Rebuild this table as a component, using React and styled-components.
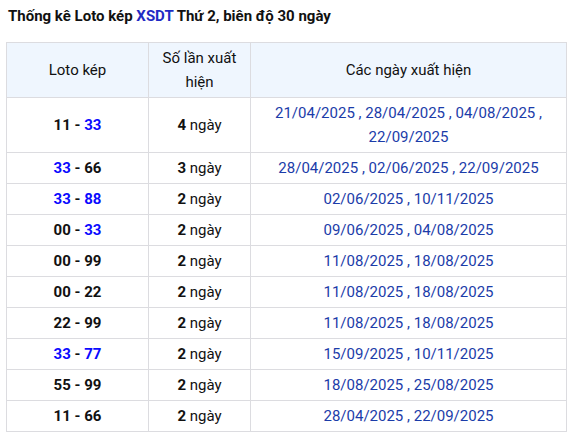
import React from 'react'
import styled, { createGlobalStyle } from 'styled-components'

const GlobalStyle = createGlobalStyle`
  body {
    margin: 0;
    background: #fff;
    font-family: Roboto, "Liberation Sans", Arial, sans-serif;
    color: #111;
  }
`

const rows = [
  { a: '11', b: '33', blue: ['33'], n: 4, dates: ['21/04/2025', '28/04/2025', '04/08/2025', '22/09/2025'] },
  { a: '33', b: '66', blue: ['33'], n: 3, dates: ['28/04/2025', '02/06/2025', '22/09/2025'] },
  { a: '33', b: '88', blue: ['33', '88'], n: 2, dates: ['02/06/2025', '10/11/2025'] },
  { a: '00', b: '33', blue: ['33'], n: 2, dates: ['09/06/2025', '04/08/2025'] },
  { a: '00', b: '99', blue: [], n: 2, dates: ['11/08/2025', '18/08/2025'] },
  { a: '00', b: '22', blue: [], n: 2, dates: ['11/08/2025', '18/08/2025'] },
  { a: '22', b: '99', blue: [], n: 2, dates: ['11/08/2025', '18/08/2025'] },
  { a: '33', b: '77', blue: ['33', '77'], n: 2, dates: ['15/09/2025', '10/11/2025'] },
  { a: '55', b: '99', blue: [], n: 2, dates: ['18/08/2025', '25/08/2025'] },
  { a: '11', b: '66', blue: [], n: 2, dates: ['28/04/2025', '22/09/2025'] },
]

const Wrapper = styled.div`
  padding: 6px 6px 0 6px;
  width: 560px;
`

const Title = styled.h3`
  margin: 0 0 16px 2px;
  font-size: 15px;
  line-height: 20px;
  font-weight: 700;
  color: #111;
  span {
    color: #1f2bc4;
  }
`

const Table = styled.table`
  width: 560px;
  border-collapse: collapse;
  table-layout: fixed;
  font-size: 15px;
`

const Th = styled.th`
  box-sizing: border-box;
  width: ${p => p.w}px;
  background: #eff6fe;
  border: 1px solid #dcdce0;
  font-weight: 400;
  line-height: 24px;
  padding: 3px 8px;
  color: #111;
`

const Td = styled.td`
  box-sizing: border-box;
  border: 1px solid #dcdce0;
  text-align: center;
  line-height: 24px;
  padding: 3px 8px;
`

const Num = styled.b`
  color: ${p => (p.blue ? '#0a0aff' : '#111')};
`

const Dates = styled(Td)`
  color: #1b3ca9;
`

export default function App() {
  return (
    <Wrapper>
      <GlobalStyle />
      <Title>
        Thống kê Loto kép <span>XSDT</span> Thứ 2, biên độ 30 ngày
      </Title>
      <Table>
        <thead>
          <tr>
            <Th w={142}>Loto kép</Th>
            <Th w={102}>Số lần xuất hiện</Th>
            <Th w={316}>Các ngày xuất hiện</Th>
          </tr>
        </thead>
        <tbody>
          {rows.map((r, i) => (
            <tr key={i}>
              <Td>
                <Num blue={r.blue.includes(r.a)}>{r.a}</Num> <b>-</b>{' '}
                <Num blue={r.blue.includes(r.b)}>{r.b}</Num>
              </Td>
              <Td>
                <b>{r.n}</b> ngày
              </Td>
              <Dates>
                {r.dates.map((d, j) => (
                  <React.Fragment key={j}>
                    {d}
                    {j < r.dates.length - 1 && ' , '}
                  </React.Fragment>
                ))}
              </Dates>
            </tr>
          ))}
        </tbody>
      </Table>
    </Wrapper>
  )
}
